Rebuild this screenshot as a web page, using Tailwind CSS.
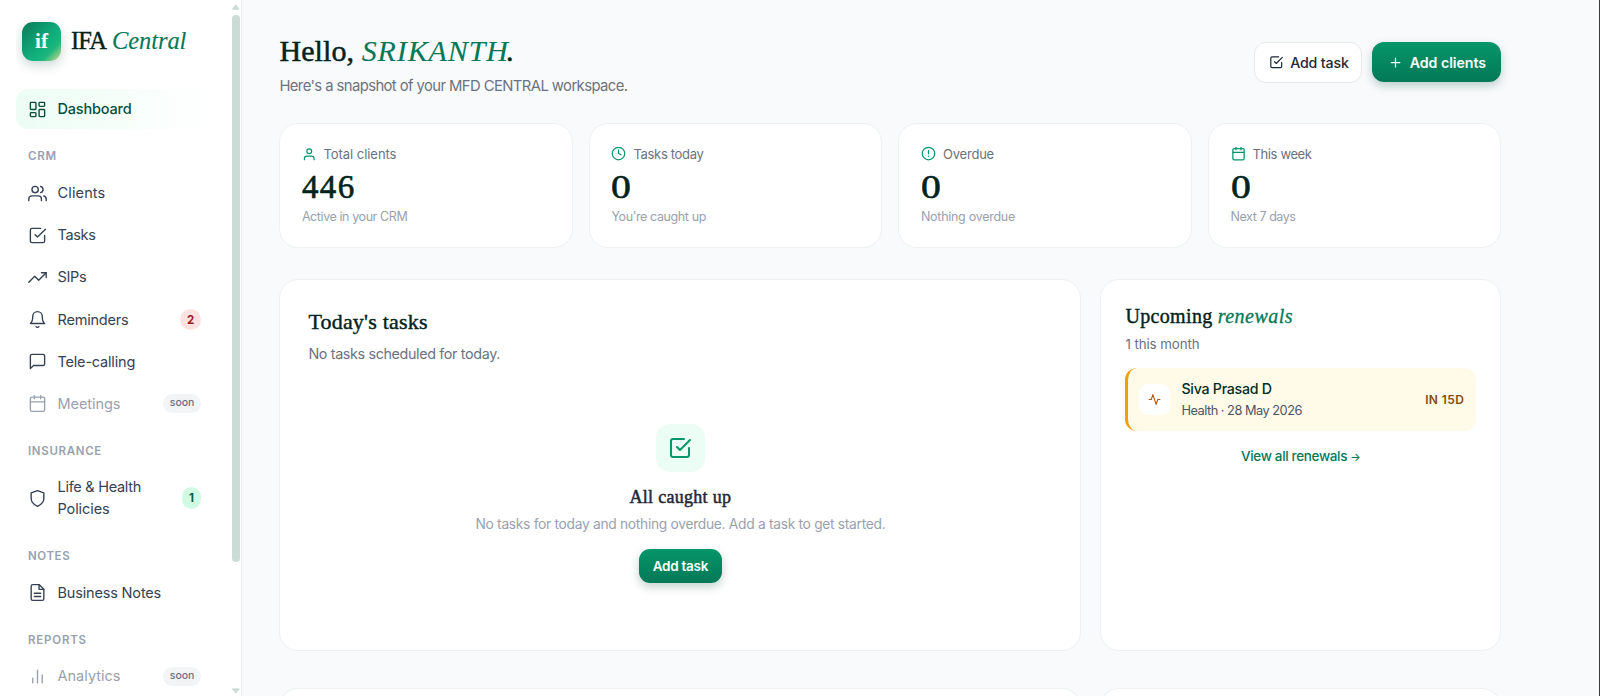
<!DOCTYPE html>
<html lang="en">
<head>
<meta charset="utf-8">
<title>IFA Central</title>
<script src="https://cdn.jsdelivr.net/npm/@tailwindcss/browser@4"></script>
</head>
<body class="h-[696px] overflow-hidden bg-[#f9fafc] font-['Inter',sans-serif] text-gray-700">
<svg class="hidden">
  <defs>
    <symbol id="grid" viewBox="0 0 24 24"><rect x="3" y="3" width="7" height="9" rx="1"/><rect x="14" y="3" width="7" height="5" rx="1"/><rect x="14" y="12" width="7" height="9" rx="1"/><rect x="3" y="16" width="7" height="5" rx="1"/></symbol>
    <symbol id="users" viewBox="0 0 24 24"><path d="M17 21v-2a4 4 0 0 0-4-4H5a4 4 0 0 0-4 4v2"/><circle cx="9" cy="7" r="4"/><path d="M23 21v-2a4 4 0 0 0-3-3.87M16 3.13a4 4 0 0 1 0 7.75"/></symbol>
    <symbol id="user" viewBox="0 0 24 24"><path d="M20 21v-2a4 4 0 0 0-4-4H8a4 4 0 0 0-4 4v2"/><circle cx="12" cy="7" r="4"/></symbol>
    <symbol id="check" viewBox="0 0 24 24"><path d="m9 11 3 3L22 4"/><path d="M21 12v7a2 2 0 0 1-2 2H5a2 2 0 0 1-2-2V5a2 2 0 0 1 2-2h11"/></symbol>
    <symbol id="trend" viewBox="0 0 24 24"><path d="m23 6-9.5 9.5-5-5L1 18"/><path d="M17 6h6v6"/></symbol>
    <symbol id="bell" viewBox="0 0 24 24"><path d="M18 8A6 6 0 0 0 6 8c0 7-3 9-3 9h18s-3-2-3-9"/><path d="M13.73 21a2 2 0 0 1-3.46 0"/></symbol>
    <symbol id="msg" viewBox="0 0 24 24"><path d="M21 15a2 2 0 0 1-2 2H7l-4 4V5a2 2 0 0 1 2-2h14a2 2 0 0 1 2 2z"/></symbol>
    <symbol id="cal" viewBox="0 0 24 24"><rect x="3" y="4" width="18" height="18" rx="2"/><path d="M16 2v4M8 2v4M3 10h18"/></symbol>
    <symbol id="shield" viewBox="0 0 24 24"><path d="M12 22s8-4 8-10V5l-8-3-8 3v7c0 6 8 10 8 10z"/></symbol>
    <symbol id="file" viewBox="0 0 24 24"><path d="M14 2H6a2 2 0 0 0-2 2v16a2 2 0 0 0 2 2h12a2 2 0 0 0 2-2V8z"/><path d="M14 2v6h6M16 13H8M16 17H8"/></symbol>
    <symbol id="bars" viewBox="0 0 24 24"><path d="M18 20V10M12 20V4M6 20v-6"/></symbol>
    <symbol id="clock" viewBox="0 0 24 24"><circle cx="12" cy="12" r="10"/><path d="M12 6v6l4 2"/></symbol>
    <symbol id="alert" viewBox="0 0 24 24"><circle cx="12" cy="12" r="10"/><path d="M12 7.5v5M12 16.3v.2"/></symbol>
    <symbol id="plus" viewBox="0 0 24 24"><path d="M12 5v14M5 12h14"/></symbol>
    <symbol id="pulse" viewBox="0 0 24 24"><path d="M22 12h-4l-3 9L9 3l-3 9H2"/></symbol>
  </defs>
</svg>
<div class="flex h-full">
  <aside class="flex w-[242px] shrink-0 justify-between border-r border-[#e9efee] bg-white">
    <div class="ml-4 h-[696px] w-[201px] overflow-hidden">
      <div class="flex items-center gap-[10px] pl-[6px] pt-[21.5px]">
        <div class="flex size-[39px] items-center justify-center rounded-[11px] bg-[linear-gradient(135deg,#0a7a5b_0%,#10b17c_60%,#1fb67d_75%,#d3db8a_100%)] font-['Liberation_Serif',serif] text-[21px] font-bold leading-none text-white shadow-[0_4px_12px_rgba(6,78,59,0.22)]">if</div>
        <div class="whitespace-nowrap font-['Liberation_Serif',serif] text-[24.5px] leading-8 text-[#02231c] [-webkit-text-stroke:0.4px]"><span class="tracking-[-0.9px]">IFA</span> <i class="tracking-[-0.1px] text-[#047857] [-webkit-text-stroke:0.1px]">Central</i></div>
      </div>
      <nav class="mt-[28.5px] text-[14.5px] leading-[22px]">
        <a class="flex h-10 items-center gap-[10.5px] rounded-xl bg-linear-to-r from-[#ecfdf5] to-white pl-3 font-medium text-[#064e3b]"><svg class="size-[19px] fill-none stroke-current stroke-[1.75] [stroke-linecap:round] [stroke-linejoin:round]"><use href="#grid"/></svg><span class="tracking-[-0.18px]">Dashboard</span></a>
        <div class="h-[44px] pl-3 pt-[18.3px] text-[11.5px] font-semibold leading-[18px] tracking-[0.8px] text-gray-400">CRM</div>
        <a class="mb-[2.2px] flex h-10 items-center gap-[10.5px] pl-3"><svg class="size-[19px] fill-none stroke-current stroke-[1.75] [stroke-linecap:round] [stroke-linejoin:round]"><use href="#users"/></svg><span class="tracking-[0.14px]">Clients</span></a>
        <a class="mb-[2.2px] flex h-10 items-center gap-[10.5px] pl-3"><svg class="size-[19px] fill-none stroke-current stroke-[1.75] [stroke-linecap:round] [stroke-linejoin:round]"><use href="#check"/></svg><span class="tracking-[-0.35px]">Tasks</span></a>
        <a class="mb-[2.2px] flex h-10 items-center gap-[10.5px] pl-3"><svg class="size-[19px] fill-none stroke-current stroke-[1.75] [stroke-linecap:round] [stroke-linejoin:round]"><use href="#trend"/></svg><span class="tracking-[-0.29px]">SIPs</span></a>
        <a class="mb-[2.2px] flex h-10 items-center gap-[10.5px] pl-3 pr-4"><svg class="size-[19px] fill-none stroke-current stroke-[1.75] [stroke-linecap:round] [stroke-linejoin:round]"><use href="#bell"/></svg><span class="tracking-[-0.2px]">Reminders</span><b class="ml-auto flex h-[21px] w-[21px] items-center justify-center rounded-full bg-[#fee2e2] text-[11.5px] text-[#991b1b]">2</b></a>
        <a class="mb-[2.2px] flex h-10 items-center gap-[10.5px] pl-3"><svg class="size-[19px] fill-none stroke-current stroke-[1.75] [stroke-linecap:round] [stroke-linejoin:round]"><use href="#msg"/></svg><span class="tracking-[-0.19px]">Tele-calling</span></a>
        <a class="flex h-10 items-center gap-[10.5px] pl-3 pr-4 text-gray-400"><svg class="size-[19px] fill-none stroke-current stroke-[1.75] [stroke-linecap:round] [stroke-linejoin:round]"><use href="#cal"/></svg><span class="tracking-[-0.05px]">Meetings</span><span class="ml-auto flex h-[19px] w-[38px] items-center justify-center rounded-full bg-gray-100 pb-px text-[10.5px] font-medium tracking-[-0.1px] text-gray-500">soon</span></a>
        <div class="h-[43.7px] pl-3 pt-[18px] text-[11.5px] font-semibold leading-[18px] tracking-[0.68px] text-gray-400">INSURANCE</div>
        <a class="flex h-[61px] items-center gap-[10.5px] pl-3 pr-4"><svg class="size-[19px] fill-none stroke-current stroke-[1.75] [stroke-linecap:round] [stroke-linejoin:round]"><use href="#shield"/></svg><span class="leading-[22px]"><span class="tracking-[-0.28px]">Life &amp; Health</span><br><span class="tracking-[-0.09px]">Policies</span></span><b class="ml-auto flex h-[22px] w-[19px] items-center justify-center rounded-full bg-[#d1fae5] text-[11.5px] text-[#065f46]">1</b></a>
        <div class="h-[44px] pl-3 pt-[18.3px] text-[11.5px] font-semibold leading-[18px] tracking-[0.6px] text-gray-400">NOTES</div>
        <a class="flex h-10 items-center gap-[10.5px] pl-3"><svg class="size-[19px] fill-none stroke-current stroke-[1.75] [stroke-linecap:round] [stroke-linejoin:round]"><use href="#file"/></svg><span class="tracking-[-0.17px]">Business Notes</span></a>
        <div class="h-[43.5px] pl-3 pt-[18px] text-[11.5px] font-semibold leading-[18px] tracking-[0.8px] text-gray-400">REPORTS</div>
        <a class="flex h-10 items-center gap-[10.5px] pl-3 pr-4 text-gray-400"><svg class="size-[19px] fill-none stroke-current stroke-[1.75] [stroke-linecap:round] [stroke-linejoin:round]"><use href="#bars"/></svg><span class="tracking-[0.02px]">Analytics</span><span class="ml-auto flex h-[19px] w-[38px] items-center justify-center rounded-full bg-gray-100 pb-px text-[10.5px] font-medium tracking-[-0.1px] text-gray-500">soon</span></a>
      </nav>
    </div>
    <div class="mr-[1.5px] flex h-[696px] w-[7.5px] flex-col pt-1">
      <svg class="h-[6px] w-[7.5px] fill-[#cbdbd6]" viewBox="0 0 8 6"><path d="M4 0 7.8 5Q8 6 7 6H1Q0 6 .2 5z"/></svg>
      <div class="mt-[5px] h-[547px] w-[7.5px] rounded-full bg-[#cbdbd6]"></div>
      <svg class="mb-[2px] mt-auto h-[6px] w-[7.5px] fill-[#cbdbd6]" viewBox="0 0 8 6"><path d="M4 6 .2 1Q0 0 1 0h6Q8 0 7.8 1z"/></svg>
    </div>
  </aside>
  <main class="h-[696px] flex-1 overflow-hidden border-r border-[#3a3a3a] pl-[37.4px] pr-[97.8px] pt-[32.6px]">
    <header class="flex items-start justify-between">
      <div>
        <h1 class="font-['Liberation_Serif',serif] text-[30px] leading-9 text-[#02231c] [-webkit-text-stroke:0.5px]"><span class="tracking-[0.1px]">Hello,</span> <i class="tracking-[0.9px] text-[#047857] [-webkit-text-stroke:0.1px]">SRIKANTH</i><span class="-ml-[3px]">.</span></h1>
        <p class="mt-[5.6px] text-[14.8px] leading-6 tracking-[-0.57px] text-gray-500">Here's a snapshot of your MFD CENTRAL workspace.</p>
      </div>
      <div class="mt-[9.4px] flex items-center gap-[10px]">
        <button class="flex h-[41px] w-[108px] items-center gap-[6.5px] rounded-[12px] border border-[#e3ebe8] bg-white pl-[14.5px] text-[14.2px] font-medium tracking-[-0.16px] text-gray-800"><svg class="size-[14.5px] fill-none stroke-current stroke-2 [stroke-linecap:round] [stroke-linejoin:round]"><use href="#check"/></svg>Add task</button>
        <button class="flex h-[40px] w-[129.5px] items-center gap-[7px] rounded-[12px] bg-linear-to-b from-[#059669] to-[#047857] pl-[16px] text-[14.2px] font-semibold tracking-[-0.04px] text-white shadow-[0_4px_10px_rgba(6,78,59,0.25)]"><svg class="size-[15px] fill-none stroke-current stroke-2 [stroke-linecap:round]"><use href="#plus"/></svg>Add clients</button>
      </div>
    </header>
    <section class="mt-[24.8px] grid grid-cols-4 gap-[16.4px]">
      <div class="h-[125px] rounded-[19px] border border-[#edf2f1] bg-white px-[21.5px] pt-[20px]">
        <div class="flex items-center gap-[7px] text-[13px] leading-5 tracking-[-0.04px] text-gray-500"><svg class="size-[14.5px] fill-none stroke-[#059669] stroke-2 [stroke-linecap:round] [stroke-linejoin:round]"><use href="#user"/></svg>Total clients</div>
        <div class="mt-[5.3px] font-['Liberation_Serif',serif] text-[33px] leading-9 tracking-[1.4px] text-[#02231c] [-webkit-text-stroke:0.6px]">446</div>
        <div class="mt-[1.9px] text-[12.5px] leading-5 tracking-[-0.41px] text-gray-400">Active in your CRM</div>
      </div>
      <div class="h-[125px] rounded-[19px] border border-[#edf2f1] bg-white px-[21.5px] pt-[20px]">
        <div class="flex items-center gap-[7px] text-[13px] leading-5 tracking-[-0.32px] text-gray-500"><svg class="size-[15px] fill-none stroke-[#059669] stroke-2 [stroke-linecap:round] [stroke-linejoin:round]"><use href="#clock"/></svg>Tasks today</div>
        <div class="mt-[5.3px] origin-left scale-x-[1.2] font-['Liberation_Serif',serif] text-[33px] leading-9 text-[#02231c] [-webkit-text-stroke:0.6px]">0</div>
        <div class="mt-[1.9px] text-[12.5px] leading-5 tracking-[-0.4px] text-gray-400">You're caught up</div>
      </div>
      <div class="h-[125px] rounded-[19px] border border-[#edf2f1] bg-white px-[21.5px] pt-[20px]">
        <div class="flex items-center gap-[7px] text-[13px] leading-5 tracking-[-0.21px] text-gray-500"><svg class="size-[15px] fill-none stroke-[#059669] stroke-2 [stroke-linecap:round] [stroke-linejoin:round]"><use href="#alert"/></svg>Overdue</div>
        <div class="mt-[5.3px] origin-left scale-x-[1.2] font-['Liberation_Serif',serif] text-[33px] leading-9 text-[#02231c] [-webkit-text-stroke:0.6px]">0</div>
        <div class="mt-[1.9px] text-[12.5px] leading-5 tracking-[-0.28px] text-gray-400">Nothing overdue</div>
      </div>
      <div class="h-[125px] rounded-[19px] border border-[#edf2f1] bg-white px-[21.5px] pt-[20px]">
        <div class="flex items-center gap-[7px] text-[13px] leading-5 tracking-[-0.38px] text-gray-500"><svg class="size-[15px] fill-none stroke-[#059669] stroke-2 [stroke-linecap:round] [stroke-linejoin:round]"><use href="#cal"/></svg>This week</div>
        <div class="mt-[5.3px] origin-left scale-x-[1.2] font-['Liberation_Serif',serif] text-[33px] leading-9 text-[#02231c] [-webkit-text-stroke:0.6px]">0</div>
        <div class="mt-[1.9px] text-[12.5px] leading-5 tracking-[-0.44px] text-gray-400">Next 7 days</div>
      </div>
    </section>
    <section class="mt-[31px] grid grid-cols-[802px_1fr] gap-x-[19px] gap-y-[36.5px]">
      <div class="h-[372.5px] rounded-[19px] border border-[#edf2f1] bg-white px-[28px] pt-[26.6px]">
        <h2 class="font-['Liberation_Serif',serif] text-[22px] leading-[30px] tracking-[0.2px] text-[#02231c] [-webkit-text-stroke:0.4px]">Today's tasks</h2>
        <p class="mt-[6.9px] text-[14.3px] leading-[22px] tracking-[-0.34px] text-gray-500">No tasks scheduled for today.</p>
        <div class="mt-[58.5px] flex flex-col items-center">
          <div class="flex h-12 w-[49px] items-center justify-center rounded-[14px] bg-[#ecfdf5]"><svg class="size-[24px] fill-none stroke-[#059669] stroke-2 [stroke-linecap:round] [stroke-linejoin:round]"><use href="#check"/></svg></div>
          <h3 class="mt-[13.2px] font-['Liberation_Serif',serif] text-[18px] leading-6 tracking-[0.3px] text-gray-800 [-webkit-text-stroke:0.5px]">All caught up</h3>
          <p class="mt-[3.5px] text-[13.8px] leading-[22px] tracking-[-0.3px] text-gray-400">No tasks for today and nothing overdue. Add a task to get started.</p>
          <button class="mt-[14.3px] h-[34.5px] w-[82.5px] rounded-[11px] bg-linear-to-b from-[#059669] to-[#047857] text-[13.5px] font-semibold tracking-[-0.26px] text-white shadow-[0_4px_10px_rgba(6,78,59,0.25)]">Add task</button>
        </div>
      </div>
      <div class="h-[372.5px] rounded-[19px] border border-[#edf2f1] bg-white px-[24px] pt-[21.6px]">
        <h2 class="font-['Liberation_Serif',serif] text-[20px] leading-7 text-[#02231c] [-webkit-text-stroke:0.4px]"><span class="tracking-[0.35px]">Upcoming</span> <i class="tracking-[0.5px] text-[#047857] [-webkit-text-stroke:0.3px]">renewals</i></h2>
        <p class="mt-[4.6px] text-[13.3px] leading-5 tracking-[-0.08px] text-gray-500">1 this month</p>
        <div class="mt-[13.7px] flex h-[63.5px] items-center rounded-[12px] border-l-[3px] border-[#f59e0b] bg-[#fffbe8] pl-[11px] pr-[12px]">
          <div class="flex size-[30.5px] items-center justify-center rounded-[9px] bg-white"><svg class="size-[13px] fill-none stroke-[#b45309] stroke-2 [stroke-linecap:round] [stroke-linejoin:round]"><use href="#pulse"/></svg></div>
          <div class="ml-[11.5px]">
            <div class="text-[14.2px] font-medium leading-5 tracking-[-0.25px] text-[#052e26]">Siva Prasad D</div>
            <div class="mt-[2px] text-[12.8px] leading-5 tracking-[-0.5px] text-gray-600">Health · 28 May 2026</div>
          </div>
          <span class="ml-auto text-[12px] font-semibold tracking-[0.38px] text-[#854d0e]">IN 15D</span>
        </div>
        <div class="mt-[14.4px] text-center text-[13.5px] font-medium leading-5 tracking-[-0.34px] text-[#047857]">View all renewals <span class="text-[11px]">→</span></div>
      </div>
      <div class="h-[40px] rounded-t-[19px] border border-b-0 border-[#edf2f1] bg-white"></div>
      <div class="h-[40px] rounded-t-[19px] border border-b-0 border-[#edf2f1] bg-white"></div>
    </section>
  </main>
</div>
</body>
</html>
